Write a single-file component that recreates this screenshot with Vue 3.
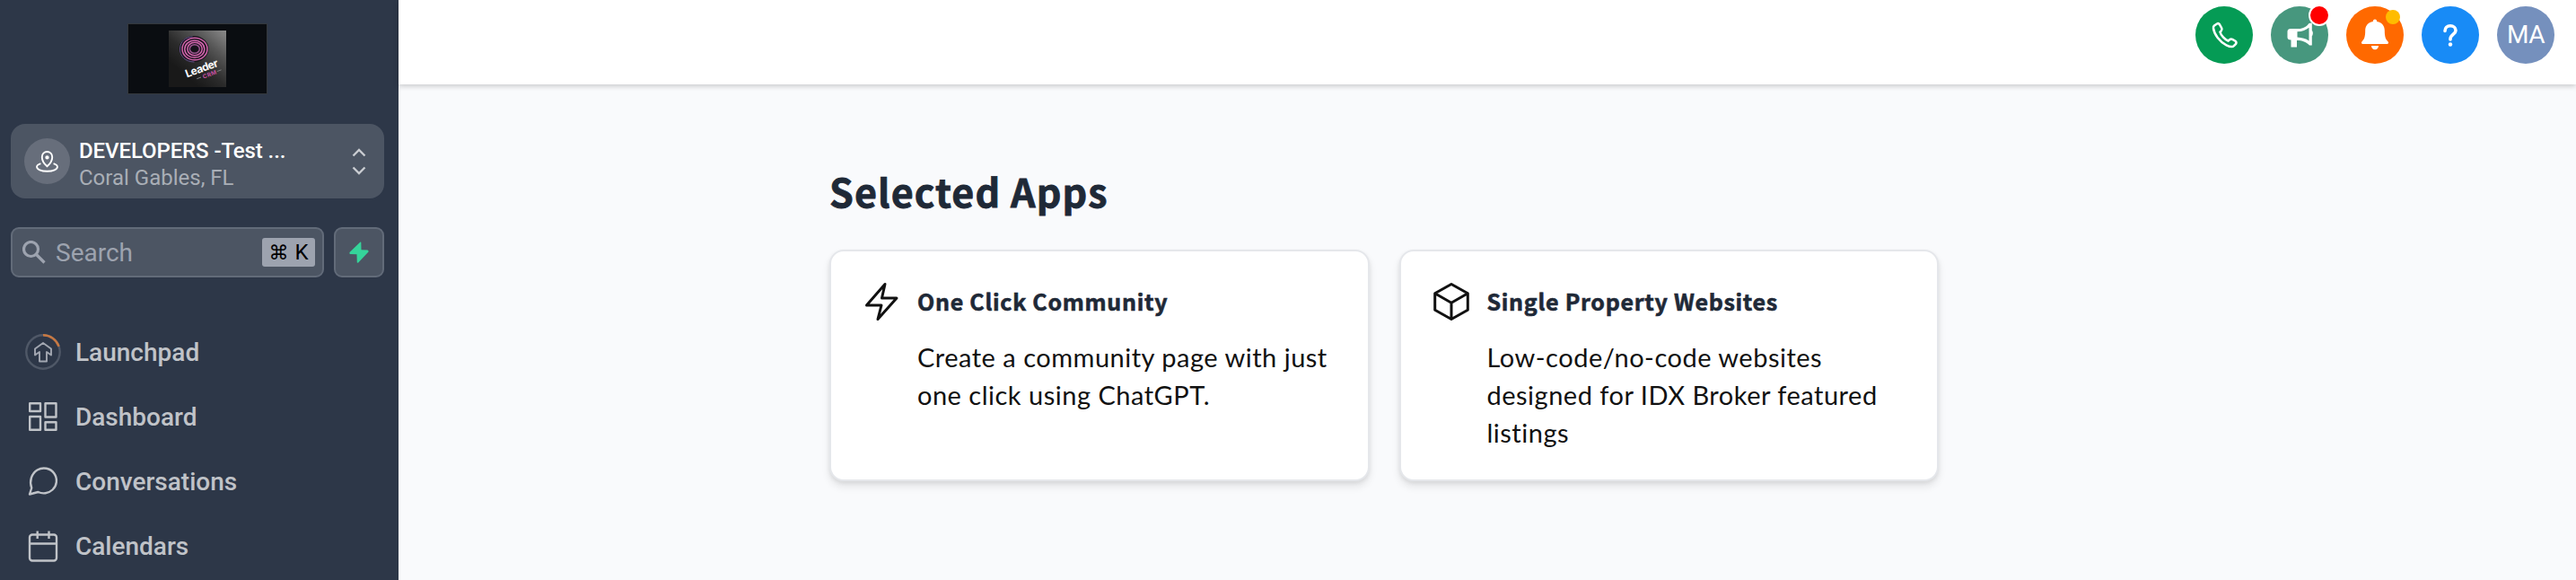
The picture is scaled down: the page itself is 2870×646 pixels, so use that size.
<template>
    <div class="layout">
        <aside class="sidebar">
            <svg class="logo" viewBox="0 0 156 79">
                <defs>
                    <linearGradient id="logoBg" x1="1" y1="0" x2="0.3" y2="0.8">
                        <stop offset="0" stop-color="#8b8b8b" />
                        <stop offset="0.35" stop-color="#565656" />
                        <stop offset="0.7" stop-color="#2b2b2b" />
                        <stop offset="1" stop-color="#191919" />
                    </linearGradient>
                </defs>
                <rect width="156" height="79" fill="#34383d" />
                <rect x="1" y="1" width="154" height="77" fill="#0a0d11" />
                <rect x="46" y="8" width="64" height="63" fill="url(#logoBg)" />
                <ellipse cx="74" cy="28.500" rx="16.500" ry="14.500" fill="#17131b" />
                <g fill="none" stroke="#d264ad" stroke-width="1.500">
                    <ellipse cx="75" cy="28.500" rx="14" ry="12.300" />
                    <ellipse cx="74.800" cy="28.700" rx="11" ry="9.600" />
                    <ellipse cx="75" cy="28.500" rx="8.200" ry="7.200" />
                    <ellipse cx="74.800" cy="28.500" rx="5.500" ry="4.800" stroke="#9b548f" />
                </g>
                <path d="M74.500 43C64.500 43 58 36 58.500 28C59 20 64.500 15.500 72.500 14.800" fill="none" stroke="#65538d" stroke-width="1" />
                <g transform="rotate(-20 66 60)">
                    <text x="66" y="60.500" class="logo-name" textLength="38">Leader</text>
                    <text x="83" y="68" class="logo-crm" textLength="16">CRM</text>
                    <path d="M76 65.500h5M100 65.500h5" stroke="#8a8a8a" stroke-width="0.800" />
                </g>
            </svg>

            <div class="location">
                <div class="location-icon">
                    <svg viewBox="0 0 24 24">
                        <path d="M12 17.500C12 17.500 17.500 12.800 17.500 7.600A5.500 5.700 0 0 0 6.500 7.600C6.500 12.800 12 17.500 12 17.500Z" />
                        <circle cx="12" cy="8" r="1.200" fill="#fff" />
                        <path d="M5.200 14.500C2.500 15.400 1 16.500 1 18C1 20.700 5.500 22.800 12 22.800S23 20.700 23 18C23 16.500 21.500 15.400 18.800 14.500" />
                    </svg>
                </div>
                <div class="location-text">
                    <div class="location-name">DEVELOPERS -Test ...</div>
                    <div class="location-city">Coral Gables, FL</div>
                </div>
                <svg class="location-arrows" viewBox="0 0 16 30">
                    <path d="M1.500 8.500L8 2L14.500 8.500M1.500 21.500L8 28L14.500 21.500" />
                </svg>
            </div>

            <div class="search-row">
                <div class="search">
                    <svg class="search-icon" viewBox="0 0 26 26">
                        <circle cx="9.500" cy="9.500" r="8" />
                        <path d="M15.500 15.500L24.500 24.500" />
                    </svg>
                    <span class="search-label">Search</span>
                    <span class="shortcut"><span class="cmd">⌘</span>K</span>
                </div>
                <div class="quick">
                    <svg viewBox="0 0 22 24">
                        <path d="M12.500 0.500L0.500 12Q0 13.500 1 14L8.500 14.300L8.800 23.500L10 23.800L21.500 11.500Q22 10 20.500 9.500L13.500 9.300L13.300 0.800Z" />
                    </svg>
                </div>
            </div>

            <nav class="menu">
                <div v-for="item in menu" :key="item.label" class="menu-item">
                    <svg class="menu-icon" viewBox="0 0 40 40">
                        <template v-if="item.icon === 'launch'">
                            <circle cx="20" cy="20" r="18.700" class="ring" />
                            <path d="M20 1.300A18.700 18.700 0 0 1 37.600 13.800" class="progress" />
                            <path d="M20 10L29 16.500V23.500L24 20V30.500H16V20L11 23.500V16.500Z" class="arrow" />
                        </template>
                        <template v-else-if="item.icon === 'grid'">
                            <path d="M5.200 5.200H17V14H5.200ZM22.500 5.200H34.500V20.500H22.500ZM5.200 20H17V34.800H5.200ZM22.500 26.200H34.500V34.800H22.500Z" />
                        </template>
                        <template v-else-if="item.icon === 'chat'">
                            <path d="M5 34.500L7.200 27.500C4.500 20 7 11.500 13.500 7.500C20 3.700 28.200 5.500 32.300 11.200C36.500 17 35.500 24.800 30.500 29.500C26 33.700 19.500 34.300 14.500 32Z" />
                        </template>
                        <template v-else>
                            <rect x="5" y="7.500" width="30" height="29" rx="3" />
                            <path d="M5 17.500H35M13.700 3.500V12M26.500 3.500V12" />
                        </template>
                    </svg>
                    <span>{{ item.label }}</span>
                </div>
            </nav>
        </aside>

        <div class="main">
            <header class="topbar">
                <div class="action phone">
                    <svg viewBox="0 0 64 64">
                        <path d="M21 21.500L24 19.500C25 18.800 26.300 19.300 27 20.300L29.300 24.500C29.800 25.800 29.500 26.800 28.500 27.700L27.500 28.700C28.500 32.500 32.500 37 36.500 38.500L38 37.300C39 36.500 40 36.300 41.300 36.900L44.500 38.800C45.600 39.600 45.700 40.800 45 42L42.800 44.200C41.500 45.500 38 45 34.500 43.300C27 39.500 20.800 31 20 24.500C19.800 23.200 20.200 22.200 21 21.500Z" fill="none" stroke="#fff" stroke-width="2.500" />
                    </svg>
                </div>
                <div class="action news">
                    <svg viewBox="0 0 64 64" fill="#fff">
                        <path d="M22 25H31C36 25 40 22.500 42.500 19L45.800 18.500V27C47.200 28 47.200 32 45.800 33.200V43.500H43C40 40 35 38 29 38V45.500H22.500V37.500C19.800 37.500 18.500 36.500 18.500 34.500V28C18.500 26 20 25 22 25Z" />
                        <path d="M29.500 28.300C35 28 39.300 26.500 42.500 23.700V38.500C39 36 35 34.800 29.500 34.500Z" fill="#47977e" />
                    </svg>
                    <span class="badge red"></span>
                </div>
                <div class="action bell">
                    <svg viewBox="0 0 64 64" fill="#fff">
                        <path d="M32 14.500C33.500 14.500 34.200 15.500 34.200 17C40 18 42.800 22 42.800 27C42.800 34 44 37 46.500 39.200C47.600 40.300 47 42 45.500 42H18.500C17 42 16.400 40.300 17.500 39.200C20 37 21.200 34 21.200 27C21.200 22 24 18 29.800 17C29.800 15.500 30.500 14.500 32 14.500Z" />
                        <path d="M28 44H36C36 46.500 34.300 48.300 32 48.300S28 46.500 28 44Z" />
                    </svg>
                    <span class="badge amber"></span>
                </div>
                <div class="action help">
                    <svg viewBox="0 0 64 64">
                        <path d="M26 27.500C26 24 28.500 21.800 32 21.800C35.500 21.800 38 24 38 27C38 31 32 31.500 32 36.500V37" fill="none" stroke="#fff" stroke-width="3.600" stroke-linecap="round" />
                        <circle cx="32" cy="42.500" r="2.200" fill="#fff" />
                    </svg>
                </div>
                <div class="action user">MA</div>
            </header>

            <section class="content">
                <h1>Selected Apps</h1>
                <div class="cards">
                    <div v-for="app in apps" :key="app.title" class="card">
                        <svg class="card-icon" viewBox="0 0 48 48">
                            <path :d="app.path" />
                        </svg>
                        <div class="card-body">
                            <h3>{{ app.title }}</h3>
                            <p>
                                <span v-for="line in app.lines" :key="line">{{ line }}</span>
                            </p>
                        </div>
                    </div>
                </div>
            </section>
        </div>
    </div>
</template>

<script setup>
const menu = [
    { label: 'Launchpad', icon: 'launch' },
    { label: 'Dashboard', icon: 'grid' },
    { label: 'Conversations', icon: 'chat' },
    { label: 'Calendars', icon: 'calendar' }
]

const apps = [
    {
        title: 'One Click Community',
        lines: ['Create a community page with just', 'one click using ChatGPT.'],
        path: 'M28 4.500L7.500 28H24L20 43.500L41 20H24.500Z'
    },
    {
        title: 'Single Property Websites',
        lines: ['Low-code/no-code websites', 'designed for IDX Broker featured', 'listings'],
        path: 'M24 4.500L42.300 14.800V33.200L24 43.500L5.700 33.200V14.800ZM5.700 14.800L24 25.200L42.300 14.800M24 25.200V43.500'
    }
]
</script>

<style>
body {
    margin: 0;
}
</style>

<style scoped>
.layout {
    display: flex;
    height: 646px;
    overflow: hidden;
    background: #f9fafc;
    font-family: Roboto, sans-serif;
}

.layout svg {
    display: block;
    flex-shrink: 0;
}

.sidebar {
    width: 444px;
    height: 646px;
    flex-shrink: 0;
    box-sizing: border-box;
    padding: 26px 16px 0 12px;
    background: #2d3748;
}

.logo {
    width: 156px;
    height: 79px;
    margin-left: 130px;
}

.logo-name {
    font: 700 12px Inter, sans-serif;
    fill: #fff;
}

.logo-crm {
    font: 700 6.5px Inter, sans-serif;
    fill: #c551a0;
}

.location {
    display: flex;
    align-items: center;
    box-sizing: border-box;
    height: 83px;
    margin-top: 33px;
    padding: 0 20px 0 15px;
    border-radius: 16px;
    background: #4c5563;
}

.location-icon {
    display: flex;
    align-items: center;
    justify-content: center;
    width: 51px;
    height: 51px;
    border-radius: 50%;
    background: #676e7b;
}

.location-icon svg {
    width: 25px;
    height: 25px;
    fill: none;
    stroke: #fff;
    stroke-width: 1.8;
}

.location-text {
    flex: 1;
    padding: 6px 0 0 10px;
    font-size: 24px;
    line-height: 30px;
    white-space: nowrap;
}

.location-name {
    color: #fff;
    font-weight: 500;
    letter-spacing: -0.1px;
}

.location-city {
    color: #a9aeb6;
}

.location-arrows {
    width: 16px;
    height: 30px;
    fill: none;
    stroke: #c9ccd1;
    stroke-width: 2.4;
}

.search-row {
    display: flex;
    gap: 11px;
    margin-top: 32px;
}

.search,
.quick {
    display: flex;
    align-items: center;
    box-sizing: border-box;
    height: 56px;
    border: 2px solid #626b79;
    border-radius: 9px;
    background: #4c5563;
}

.search {
    width: 349px;
    padding: 0 8px 0 11px;
}

.search-icon {
    width: 26px;
    height: 26px;
    fill: none;
    stroke: #9da3af;
    stroke-width: 3.2;
}

.search-label {
    flex: 1;
    padding-left: 11px;
    color: #9da3af;
    font-size: 28px;
}

.shortcut {
    display: flex;
    align-items: center;
    justify-content: center;
    gap: 7px;
    width: 59px;
    height: 32px;
    border-radius: 3px;
    background: #9da3af;
    color: #000;
    font-size: 24px;
}

.cmd {
    font-family: "DejaVu Sans", sans-serif;
    font-size: 22px;
}

.quick {
    width: 56px;
    justify-content: center;
}

.quick svg {
    width: 22px;
    height: 24px;
    fill: #35d49a;
}

.menu {
    margin-top: 47px;
}

.menu-item {
    display: flex;
    align-items: center;
    gap: 16px;
    height: 72px;
    padding-left: 16px;
    color: #c0c3c8;
    font-size: 28px;
    font-weight: 500;
}

.menu-icon {
    width: 40px;
    height: 40px;
    fill: none;
    stroke: #c0c3c8;
    stroke-width: 2.4;
    stroke-linejoin: round;
}

.menu-icon .ring {
    stroke: #4f5867;
}

.menu-icon .progress {
    stroke: #c67843;
}

.menu-icon .arrow {
    stroke: #a2a7b1;
    stroke-width: 1.9;
}

.main {
    flex: 1;
}

.topbar {
    display: flex;
    justify-content: flex-end;
    gap: 20px;
    box-sizing: border-box;
    height: 94px;
    padding: 7px 24px 0 0;
    background: #fff;
    box-shadow: 0 2px 6px rgba(0, 0, 0, 0.2);
}

.action {
    position: relative;
    width: 64px;
    height: 64px;
    border-radius: 50%;
}

.phone {
    background: #059b55;
}

.news {
    background: #47977e;
}

.bell {
    background: #ff6900;
}

.help {
    background: #188bf6;
}

.user {
    background: #7590bd;
    color: #fff;
    font-size: 28px;
    line-height: 63px;
    letter-spacing: -0.5px;
    text-align: center;
}

.badge {
    position: absolute;
    border-radius: 50%;
}

.red {
    top: -2px;
    right: -2px;
    width: 20px;
    height: 20px;
    border: 2px solid #fff;
    background: #f00;
}

.amber {
    top: 4px;
    right: 4px;
    width: 16px;
    height: 16px;
    background: #ffbc00;
}

.content {
    width: 1236px;
    margin: 0 0 0 480px;
    padding-top: 83px;
}

.content h1 {
    margin: 0;
    color: #1f2937;
    font-family: "Noto Sans CJK SC", sans-serif;
    font-size: 43px;
    font-weight: 700;
    line-height: 70px;
    letter-spacing: 1.1px;
    -webkit-text-stroke: 0.8px #1f2937;
}

.cards {
    display: flex;
    gap: 33px;
    margin-top: 31px;
}

.card {
    display: flex;
    box-sizing: border-box;
    width: 602px;
    height: 258px;
    padding: 32px 30px 0 32px;
    border: 2px solid #e5e7eb;
    border-radius: 16px;
    background: #fff;
    box-shadow: 0 6px 10px rgba(0, 0, 0, 0.09), 0 2px 4px rgba(0, 0, 0, 0.07);
}

.card-icon {
    width: 48px;
    height: 48px;
    fill: none;
    stroke: #111;
    stroke-width: 3;
    stroke-linejoin: round;
}

.card-body {
    padding-left: 16px;
}

.card h3 {
    margin: -1px 0 0;
    color: #1f2937;
    font-family: "Noto Sans CJK SC", sans-serif;
    font-size: 25px;
    font-weight: 700;
    line-height: 48px;
    letter-spacing: 0.7px;
    white-space: nowrap;
    -webkit-text-stroke: 0.6px #1f2937;
}

.card p {
    margin: 18px 0 0;
    color: #111;
    font-family: Lato, sans-serif;
    font-size: 29px;
    line-height: 42px;
    letter-spacing: 0.5px;
}

.card p span {
    display: block;
    white-space: nowrap;
}
</style>
